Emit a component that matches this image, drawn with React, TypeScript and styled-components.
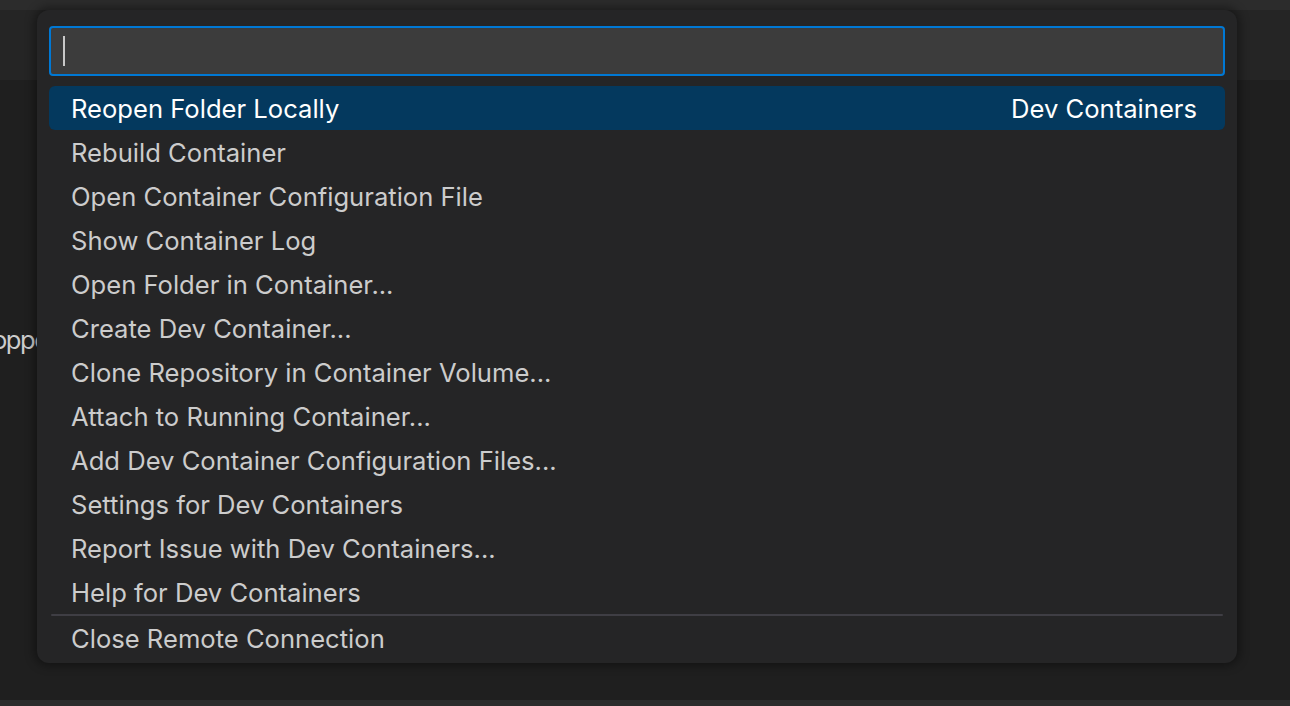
import React from "react";
import styled, { createGlobalStyle } from "styled-components";

const Global = createGlobalStyle`
  html, body { margin: 0; padding: 0; background: #1f1f1f; }
  body { width: 1290px; height: 706px; overflow: hidden; font-family: "Inter", "Noto Sans", sans-serif; }
  #root { width: 1290px; height: 706px; }
`;

const Page = styled.div`
  position: relative;
  width: 1290px;
  height: 706px;
  display: flex;
  flex-direction: column;
  overflow: hidden;
`;

const TitleBar = styled.div`
  height: 10px;
  background: #2c2c2c;
  flex: none;
`;

const TabBar = styled.div`
  height: 70px;
  background: #252525;
  flex: none;
`;

const Editor = styled.div`
  flex: 1;
  background: #1f1f1f;
  padding-top: 245px;
`;

const BgClip = styled.div`
  width: 37px;
  overflow: hidden;
`;

const BgText = styled.div`
  margin-left: -8px;
  font-size: 25.6px;
  letter-spacing: -1.5px;
  color: #cccccc;
  line-height: 30px;
  white-space: nowrap;
`;

const StatusBar = styled.div`
  height: 6px;
  background: #2b2b2b;
  flex: none;
`;

const Widget = styled.div`
  position: absolute;
  left: 37px;
  top: 10px;
  width: 1200px;
  box-sizing: border-box;
  padding: 16px 12px 3px;
  background: #252526;
  border-radius: 12px;
  box-shadow: 0 0 10px 3px rgba(0, 0, 0, 0.38);
  display: flex;
  flex-direction: column;
`;

const InputBox = styled.div`
  height: 50px;
  box-sizing: border-box;
  border: 2px solid #0078d4;
  border-radius: 4px;
  background: #3c3c3c;
  display: flex;
  align-items: center;
  padding-left: 12px;
  margin-bottom: 10px;
`;

const Caret = styled.span`
  display: block;
  width: 2px;
  height: 30px;
  background: #c8c8c8;
`;

const List = styled.div`
  display: flex;
  flex-direction: column;
`;

const Row = styled.div<{ $selected?: boolean }>`
  height: 44px;
  display: flex;
  align-items: center;
  justify-content: space-between;
  padding: 0 28px 0 22px;
  border-radius: 6px;
  font-size: 25.6px;
  color: ${(p) => (p.$selected ? "#ffffff" : "#cccccc")};
  background: ${(p) => (p.$selected ? "#04395e" : "transparent")};
  white-space: nowrap;
`;

const Label = styled.span``;
const Detail = styled.span``;

const Separator = styled.div`
  height: 2px;
  margin: 0 2px;
  border-radius: 1px;
  background: #3f3e44;
`;

const items = [
  "Rebuild Container",
  "Open Container Configuration File",
  "Show Container Log",
  "Open Folder in Container...",
  "Create Dev Container...",
  "Clone Repository in Container Volume...",
  "Attach to Running Container...",
  "Add Dev Container Configuration Files...",
  "Settings for Dev Containers",
  "Report Issue with Dev Containers...",
  "Help for Dev Containers",
];

export default function App() {
  return (
    <>
      <Global />
      <Page>
        <TitleBar />
        <TabBar />
        <Editor>
          <BgClip>
            <BgText>opportunity</BgText>
          </BgClip>
        </Editor>
        <StatusBar />
        <Widget>
          <InputBox>
            <Caret />
          </InputBox>
          <List>
            <Row $selected>
              <Label>Reopen Folder Locally</Label>
              <Detail>Dev Containers</Detail>
            </Row>
            {items.map((t) => (
              <Row key={t}>
                <Label>{t}</Label>
              </Row>
            ))}
            <Separator />
            <Row>
              <Label>Close Remote Connection</Label>
            </Row>
          </List>
        </Widget>
      </Page>
    </>
  );
}
